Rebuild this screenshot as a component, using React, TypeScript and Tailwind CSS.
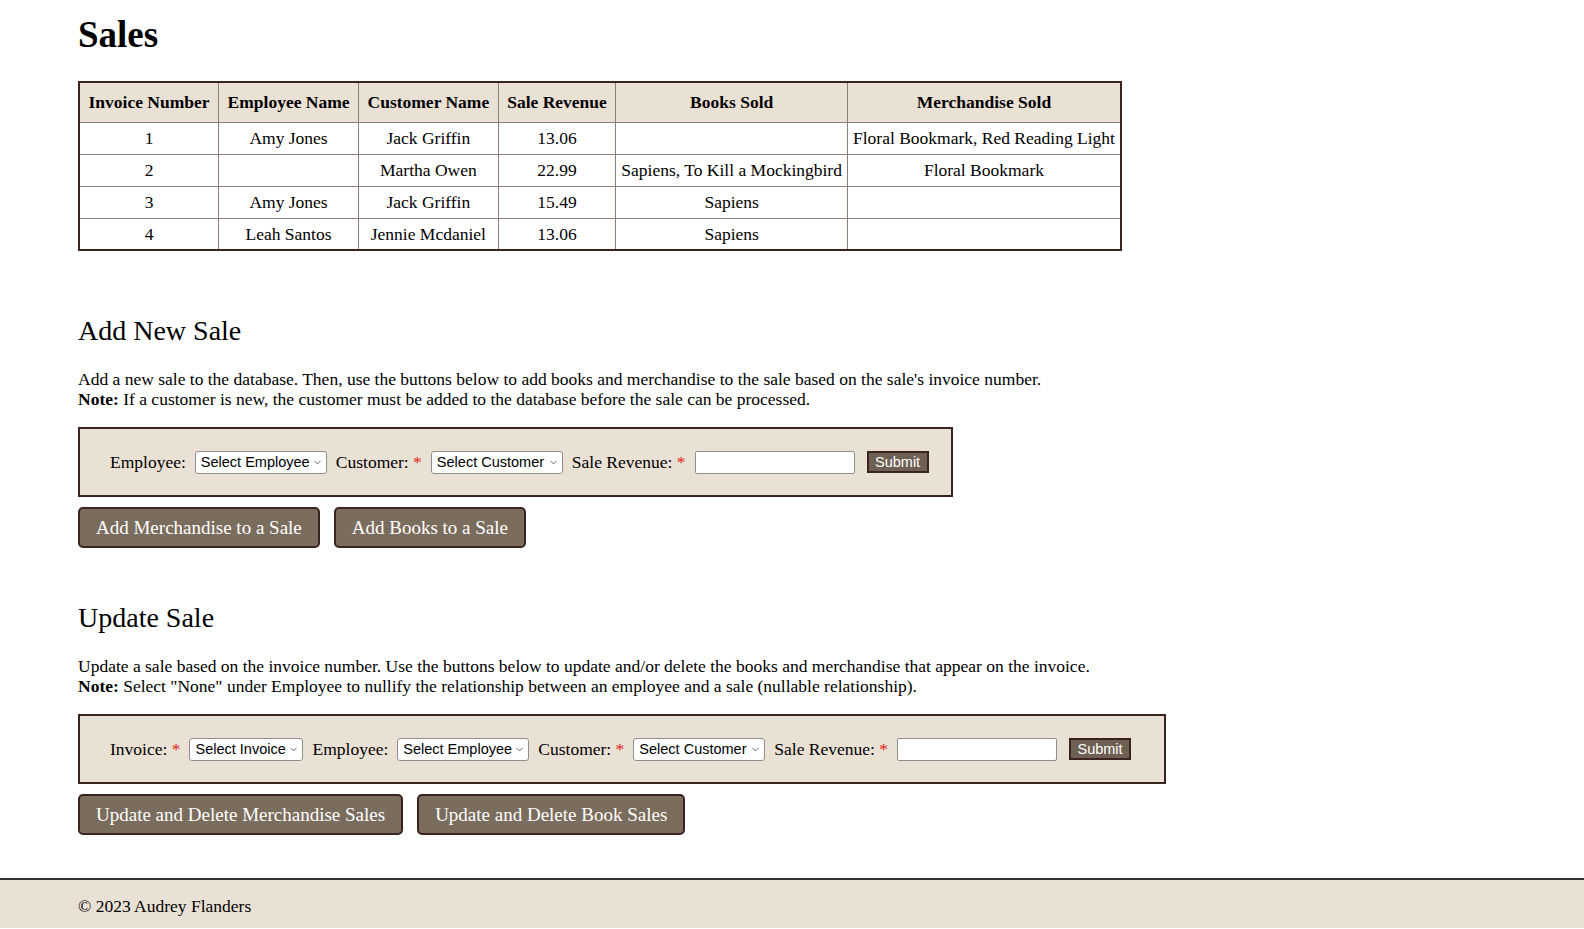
import { ChevronDown } from "lucide-react";

const sales = [
  { id: 1, employee: "Amy Jones", customer: "Jack Griffin", revenue: "13.06", books: "", merch: "Floral Bookmark, Red Reading Light" },
  { id: 2, employee: "", customer: "Martha Owen", revenue: "22.99", books: "Sapiens, To Kill a Mockingbird", merch: "Floral Bookmark" },
  { id: 3, employee: "Amy Jones", customer: "Jack Griffin", revenue: "15.49", books: "Sapiens", merch: "" },
  { id: 4, employee: "Leah Santos", customer: "Jennie Mcdaniel", revenue: "13.06", books: "Sapiens", merch: "" },
];

const headers = ["Invoice Number", "Employee Name", "Customer Name", "Sale Revenue", "Books Sold", "Merchandise Sold"];

function Select({ label, width }: { label: string; width: string }) {
  return (
    <div className={`relative h-[23px] ${width}`}>
      <select className="h-full w-full appearance-none rounded-[3px] border border-[#8f8f8f] bg-white pl-[5px] pr-[16px] font-['Liberation_Sans',Arial,sans-serif] text-[14.5px] leading-[20px] text-black outline-none">
        <option>{label}</option>
      </select>
      <ChevronDown className="pointer-events-none absolute right-[4px] top-[6px] h-[11px] w-[11px] text-[#333]" strokeWidth={1.6} />
    </div>
  );
}

function Label({ text, required }: { text: string; required?: boolean }) {
  return (
    <span className="whitespace-nowrap">
      {text}
      {required && <span className="text-[#e0241b]"> *</span>}
    </span>
  );
}

function RevenueInput() {
  return <input className="h-[23px] w-[160px] rounded-[2px] border border-[#8f8f8f] bg-white outline-none" />;
}

function SubmitButton() {
  return (
    <button className="h-[22px] w-[62px] border-2 border-[#3b2420] bg-[#6e6153] font-['Liberation_Sans',Arial,sans-serif] text-[14.5px] leading-[17px] text-white">
      Submit
    </button>
  );
}

function BigButton({ children }: { children: string }) {
  return (
    <button className="h-[41px] whitespace-nowrap rounded-[5px] border-2 border-[#3b2420] bg-[#7b6d5e] px-[16px] font-['Liberation_Serif',serif] text-[19px] text-white">
      {children}
    </button>
  );
}

export default function App() {
  return (
    <div className="min-h-screen bg-white font-['Liberation_Serif','Times_New_Roman',serif] text-[17.5px] leading-[20px] text-black">
      <main className="px-[78px]">
        {/* TITLE */}
        <h1 className="mt-[15px] mb-[26px] h-[40px] text-[37px] font-bold leading-[40px]">Sales</h1>

        {/* SALES TABLE */}
        <table className="border-collapse border-2 border-[#3b2420] text-center">
          <thead>
            <tr className="bg-[#eae1d5]">
              {headers.map((h) => (
                <th key={h} className="h-[40px] border border-[#8b7d77] px-[8.5px] font-bold whitespace-nowrap">
                  {h}
                </th>
              ))}
            </tr>
          </thead>
          <tbody>
            {sales.map((s) => (
              <tr key={s.id}>
                <td className="h-[32px] border border-[#8b7d77] px-[5px] whitespace-nowrap">{s.id}</td>
                <td className="h-[32px] border border-[#8b7d77] px-[5px] whitespace-nowrap">{s.employee}</td>
                <td className="h-[32px] border border-[#8b7d77] px-[5px] whitespace-nowrap">{s.customer}</td>
                <td className="h-[32px] border border-[#8b7d77] px-[5px] whitespace-nowrap">{s.revenue}</td>
                <td className="h-[32px] border border-[#8b7d77] px-[5px] whitespace-nowrap">{s.books}</td>
                <td className="h-[32px] border border-[#8b7d77] px-[5px] whitespace-nowrap">{s.merch}</td>
              </tr>
            ))}
          </tbody>
        </table>

        {/* ADD NEW SALE */}
        <h2 className="mt-[63px] mb-[21px] h-[34px] text-[28px] leading-[34px]">Add New Sale</h2>
        <p>Add a new sale to the database. Then, use the buttons below to add books and merchandise to the sale based on the sale's invoice number.</p>
        <p>
          <b>Note:</b> If a customer is new, the customer must be added to the database before the sale can be processed.
        </p>

        <div className="mt-[18px] flex h-[70px] w-[875px] items-center gap-[9px] border-2 border-[#3b2420] bg-[#eae1d5] pl-[30px]">
          <Label text="Employee:" />
          <Select label="Select Employee" width="w-[132px]" />
          <Label text="Customer:" required />
          <Select label="Select Customer" width="w-[132px]" />
          <Label text="Sale Revenue:" required />
          <RevenueInput />
          <span className="ml-[3px]">
            <SubmitButton />
          </span>
        </div>

        <div className="mt-[10px] flex gap-[14px]">
          <BigButton>Add Merchandise to a Sale</BigButton>
          <BigButton>Add Books to a Sale</BigButton>
        </div>

        {/* UPDATE SALE */}
        <h2 className="mt-[53px] mb-[21px] h-[34px] text-[28px] leading-[34px]">Update Sale</h2>
        <p>Update a sale based on the invoice number. Use the buttons below to update and/or delete the books and merchandise that appear on the invoice.</p>
        <p>
          <b>Note:</b> Select "None" under Employee to nullify the relationship between an employee and a sale (nullable relationship).
        </p>

        <div className="mt-[18px] flex h-[70px] w-[1088px] items-center gap-[9px] border-2 border-[#3b2420] bg-[#eae1d5] pl-[30px]">
          <Label text="Invoice:" required />
          <Select label="Select Invoice" width="w-[114px]" />
          <Label text="Employee:" />
          <Select label="Select Employee" width="w-[132px]" />
          <Label text="Customer:" required />
          <Select label="Select Customer" width="w-[132px]" />
          <Label text="Sale Revenue:" required />
          <RevenueInput />
          <span className="ml-[3px]">
            <SubmitButton />
          </span>
        </div>

        <div className="mt-[10px] flex gap-[14px]">
          <BigButton>Update and Delete Merchandise Sales</BigButton>
          <BigButton>Update and Delete Book Sales</BigButton>
        </div>
      </main>

      {/* FOOTER */}
      <footer className="mt-[43px] h-[50px] border-t-2 border-[#333] bg-[#eae1d5] px-[78px] pt-[16px]">
        © 2023 Audrey Flanders
      </footer>
    </div>
  );
}
